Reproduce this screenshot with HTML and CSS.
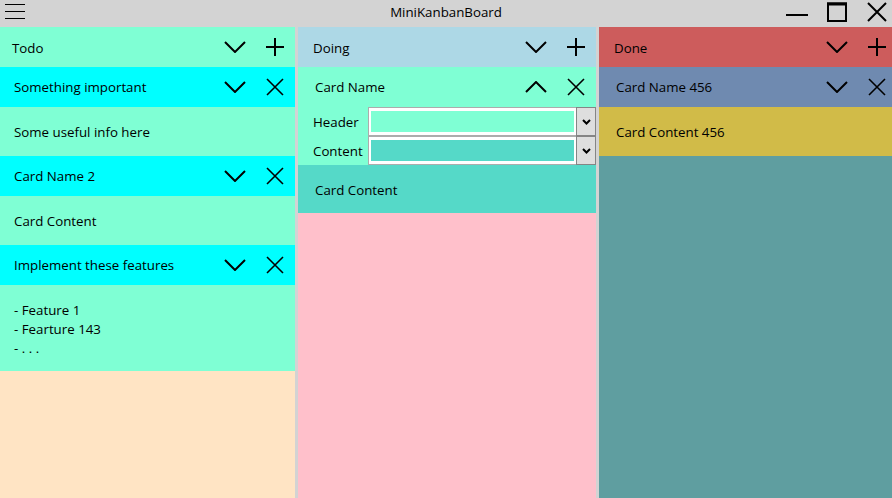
FILE: index.html
```html
<!DOCTYPE html>
<html lang="en">
<head>
<meta charset="utf-8">
<title>MiniKanbanBoard</title>
<link rel="stylesheet" href="styles.css">
</head>
<body>
<div class="app">
  <header class="titlebar">
    <div class="tb-left">
      <svg class="hamburger" width="20" height="20" viewBox="0 0 20 20"><path d="M0 4.5H20M0 11.5H20M0 18.5H20" stroke="#000" stroke-width="1"/></svg>
    </div>
    <div class="tb-title">MiniKanbanBoard</div>
    <div class="tb-controls">
      <svg width="22" height="20" viewBox="0 0 22 20"><path d="M0 13H22" stroke="#000" stroke-width="2"/></svg>
      <svg width="20" height="20" viewBox="0 0 20 20"><rect x="1" y="1.5" width="18" height="17.5" fill="none" stroke="#000" stroke-width="2"/><path d="M0 2H20" stroke="#000" stroke-width="3"/></svg>
      <svg width="20" height="20" viewBox="0 0 20 20"><path d="M1 1L19 19M19 1L1 19" stroke="#000" stroke-width="2"/></svg>
    </div>
  </header>

  <main class="board">
    <section class="column col-todo">
      <div class="col-header hdr-todo">
        <span class="label">Todo</span>
        <button class="icon-btn"><svg width="22" height="12" viewBox="0 0 22 12"><path d="M1 1L11 11L21 1" fill="none" stroke="#000" stroke-width="2"/></svg></button>
        <button class="icon-btn"><svg width="18" height="18" viewBox="0 0 18 18"><path d="M9 0V18M0 9H18" stroke="#000" stroke-width="2"/></svg></button>
      </div>

      <div class="card">
        <div class="card-header bg-cyan">
          <span class="label">Something important</span>
          <button class="icon-btn"><svg width="22" height="12" viewBox="0 0 22 12"><path d="M1 1L11 11L21 1" fill="none" stroke="#000" stroke-width="2"/></svg></button>
          <button class="icon-btn"><svg width="18" height="18" viewBox="0 0 18 18"><path d="M1 1L17 17M17 1L1 17" stroke="#000" stroke-width="1.6"/></svg></button>
        </div>
        <div class="card-content bg-aqua">Some useful info here</div>
      </div>

      <div class="card">
        <div class="card-header bg-cyan">
          <span class="label">Card Name 2</span>
          <button class="icon-btn"><svg width="22" height="12" viewBox="0 0 22 12"><path d="M1 1L11 11L21 1" fill="none" stroke="#000" stroke-width="2"/></svg></button>
          <button class="icon-btn"><svg width="18" height="18" viewBox="0 0 18 18"><path d="M1 1L17 17M17 1L1 17" stroke="#000" stroke-width="1.6"/></svg></button>
        </div>
        <div class="card-content bg-aqua">Card Content</div>
      </div>

      <div class="card">
        <div class="card-header bg-cyan">
          <span class="label">Implement these features</span>
          <button class="icon-btn"><svg width="22" height="12" viewBox="0 0 22 12"><path d="M1 1L11 11L21 1" fill="none" stroke="#000" stroke-width="2"/></svg></button>
          <button class="icon-btn"><svg width="18" height="18" viewBox="0 0 18 18"><path d="M1 1L17 17M17 1L1 17" stroke="#000" stroke-width="1.6"/></svg></button>
        </div>
        <div class="card-content content-multi bg-aqua">- Feature 1<br>- Fearture 143<br>- . . .</div>
      </div>
    </section>

    <section class="column col-doing">
      <div class="col-header hdr-doing">
        <span class="label">Doing</span>
        <button class="icon-btn"><svg width="22" height="12" viewBox="0 0 22 12"><path d="M1 1L11 11L21 1" fill="none" stroke="#000" stroke-width="2"/></svg></button>
        <button class="icon-btn"><svg width="18" height="18" viewBox="0 0 18 18"><path d="M9 0V18M0 9H18" stroke="#000" stroke-width="2"/></svg></button>
      </div>

      <div class="card">
        <div class="card-header bg-aqua">
          <span class="label">Card Name</span>
          <button class="icon-btn"><svg width="22" height="12" viewBox="0 0 22 12"><path d="M1 11L11 1L21 11" fill="none" stroke="#000" stroke-width="2"/></svg></button>
          <button class="icon-btn"><svg width="18" height="18" viewBox="0 0 18 18"><path d="M1 1L17 17M17 1L1 17" stroke="#000" stroke-width="1.6"/></svg></button>
        </div>
        <div class="card-form bg-aqua">
          <span class="form-label">Header</span>
          <div class="combo">
            <div class="combo-fill fill-aqua"></div>
            <div class="combo-btn"><svg width="9" height="6" viewBox="0 0 9 6"><path d="M1 1L4.5 4.5L8 1" fill="none" stroke="#000" stroke-width="2"/></svg></div>
          </div>
          <span class="form-label">Content</span>
          <div class="combo">
            <div class="combo-fill fill-turq"></div>
            <div class="combo-btn"><svg width="9" height="6" viewBox="0 0 9 6"><path d="M1 1L4.5 4.5L8 1" fill="none" stroke="#000" stroke-width="2"/></svg></div>
          </div>
        </div>
        <div class="card-content content-tight bg-turq">Card Content</div>
      </div>
    </section>

    <section class="column col-done">
      <div class="col-header hdr-done">
        <span class="label">Done</span>
        <button class="icon-btn"><svg width="22" height="12" viewBox="0 0 22 12"><path d="M1 1L11 11L21 1" fill="none" stroke="#000" stroke-width="2"/></svg></button>
        <button class="icon-btn"><svg width="18" height="18" viewBox="0 0 18 18"><path d="M9 0V18M0 9H18" stroke="#000" stroke-width="2"/></svg></button>
      </div>

      <div class="card">
        <div class="card-header bg-slate">
          <span class="label">Card Name 456</span>
          <button class="icon-btn"><svg width="22" height="12" viewBox="0 0 22 12"><path d="M1 1L11 11L21 1" fill="none" stroke="#000" stroke-width="2"/></svg></button>
          <button class="icon-btn"><svg width="18" height="18" viewBox="0 0 18 18"><path d="M1 1L17 17M17 1L1 17" stroke="#000" stroke-width="1.6"/></svg></button>
        </div>
        <div class="card-content bg-gold">Card Content 456</div>
      </div>
    </section>
  </main>
</div>
</body>
</html>
```

FILE: styles.css
```css
* { box-sizing: border-box; }

html, body {
  margin: 0;
  padding: 0;
  width: 892px;
  height: 498px;
  overflow: hidden;
}

body {
  font-family: "Open Sans", "Noto Sans", sans-serif;
  font-size: 13.3px;
  color: #000;
  background: #d3d3d3;
}

.app {
  display: flex;
  flex-direction: column;
  height: 498px;
}

.titlebar {
  height: 27px;
  flex: none;
  background: #d3d3d3;
  display: grid;
  grid-template-columns: 1fr auto 1fr;
  align-items: start;
}

.tb-left {
  padding-left: 5px;
  display: flex;
}

.tb-title {
  line-height: 25px;
}

.tb-controls {
  display: flex;
  justify-content: flex-end;
  gap: 19px;
  padding-top: 2px;
  padding-right: 5px;
}

.tb-controls svg:last-child { margin-left: 1px; }

.board {
  flex: 1;
  display: grid;
  grid-template-columns: 298px 298px 298px;
  column-gap: 3px;
  margin-left: -3px;
  min-height: 0;
}

.column {
  display: flex;
  flex-direction: column;
}

.col-todo { background: #ffe4c4; }
.col-doing { background: #ffc0cb; }
.col-done { background: #5f9ea0; }

.col-header,
.card-header {
  height: 40px;
  display: flex;
  align-items: center;
}

.col-header .label { padding: 2px 0 0 15px; }
.card-header .label { padding-left: 17px; }

.label {
  flex: 1;
  white-space: nowrap;
  overflow: hidden;
}

.hdr-todo { background: #7fffd4; }
.hdr-doing { background: #add8e6; }
.hdr-done { background: #cd5c5c; }

.icon-btn {
  width: 40px;
  height: 40px;
  flex: none;
  padding: 0;
  border: none;
  background: transparent;
  display: flex;
  align-items: center;
  justify-content: center;
}

.icon-btn svg { display: block; }

.bg-cyan { background: #00ffff; }
.bg-aqua { background: #7fffd4; }
.bg-turq { background: #55d9c8; }
.bg-slate { background: #6f8ab0; }
.bg-gold { background: #d1bb48; }

.card-content {
  padding: 16px 17px 14px;
  line-height: 19px;
}

.content-multi { padding-bottom: 13px; }

.content-tight { padding: 16px 17px 13px; }

.card-form {
  display: grid;
  grid-template-columns: 70px 1fr;
}

.form-label {
  height: 29px;
  line-height: 27px;
  padding: 2px 0 0 15px;
}

.combo {
  height: 29px;
  display: flex;
  border: 1px solid #acacac;
  background: #fff;
}

.combo-fill {
  flex: 1;
  margin: 3px 2px;
}

.fill-aqua { background: #7fffd4; }
.fill-turq { background: #55d9c8; }

.combo-btn {
  width: 20px;
  flex: none;
  margin: -1px -1px -1px 0;
  border: 1px solid #858585;
  background: #dedede;
  display: flex;
  align-items: center;
  justify-content: center;
}

.combo-btn svg { display: block; }
```
